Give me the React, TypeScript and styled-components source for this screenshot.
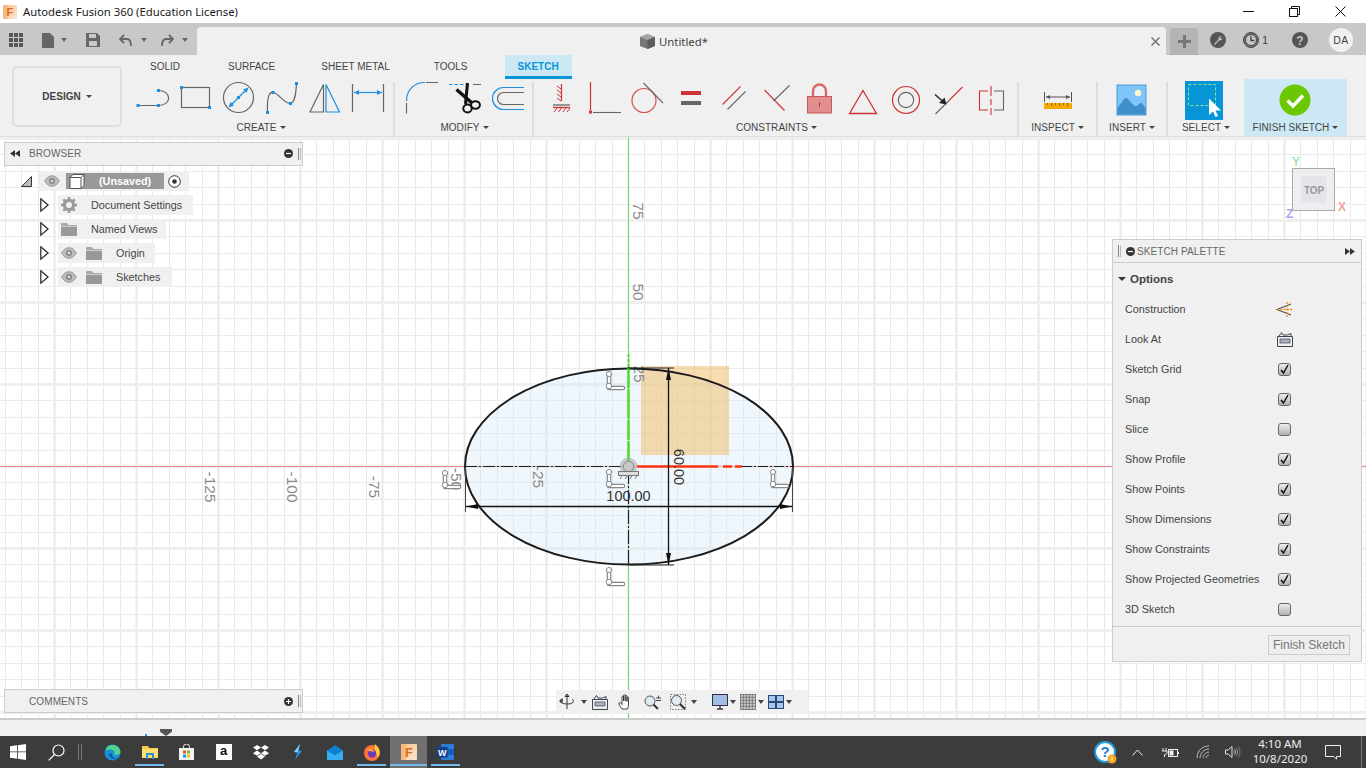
import React from "react";
import styled, { createGlobalStyle } from "styled-components";

const Global = createGlobalStyle`
  html, body { margin: 0; padding: 0; height: 100%; overflow: hidden; }
  body { font-family: "Liberation Sans", Arial, sans-serif; background: #fff; }
  * { box-sizing: border-box; }
`;

const Shell = styled.div`
  width: 1366px; height: 768px; display: flex; flex-direction: column; overflow: hidden;
`;

/* Title bar */
const TitleBar = styled.div`
  height: 23px; background: #fff; display: flex; align-items: center; padding-left: 3px;
`;
const TitleText = styled.span`
  font-family: "Noto Sans", sans-serif; font-size: 11.3px; color: #1a1a1a; margin-left: 6px; white-space: nowrap;
`;
const WinControls = styled.div`
  margin-left: auto; display: flex; align-items: center; width: 141px;
`;
const WinBtn = styled.div`
  width: 46px; height: 23px; display: flex; align-items: center; justify-content: center;
`;

/* QAT */
const QatBar = styled.div`
  height: 32px; background: #c8c8c8; display: flex;
`;
const QatLeft = styled.div`
  width: 197px; display: flex; align-items: center; padding-left: 9px; padding-top: 2px;
`;
const QatIcon = styled.svg<{ $ml: number }>`
  margin-left: ${p => p.$ml}px; flex: none; display: block;
`;
const Caret = styled.span<{ $ml?: number; $c?: string; $w?: number }>`
  display: inline-block; flex: none; width: 0; height: 0;
  margin-left: ${p => p.$ml ?? 0}px;
  border-left: ${p => (p.$w ?? 6) / 2}px solid transparent;
  border-right: ${p => (p.$w ?? 6) / 2}px solid transparent;
  border-top: ${p => Math.round((p.$w ?? 6) * 0.55)}px solid ${p => p.$c ?? "#444"};
`;
const DocTab = styled.div`
  width: 969px; margin-top: 4px; background: #f0f0f0; border-radius: 4px 4px 0 0;
  display: grid; grid-template-columns: 1fr 22px; align-items: center;
`;
const DocTitle = styled.div`
  display: flex; align-items: center; justify-content: center; gap: 4px; padding-left: 7px;
  font-family: "Noto Sans", sans-serif; font-size: 11.3px; color: #444;
`;
const DocClose = styled.div`
  display: flex; justify-content: center;
`;
const PlusTab = styled.div`
  width: 28px; height: 27px; margin: 5px 0 0 4px; background: #b4b4b4; border-radius: 3px 3px 0 0;
  display: flex; align-items: center; justify-content: center;
`;
const QatRight = styled.div`
  display: flex; align-items: center; padding-top: 2px;
`;
const QatCount = styled.span`
  font-size: 11px; color: #444; margin-left: 3px; width: 6px;
`;
const Avatar = styled.div`
  width: 24px; height: 24px; border-radius: 50%; background: #f0f0f0; margin-left: 21px;
  display: flex; align-items: center; justify-content: center; font-size: 10.5px; color: #444; letter-spacing: .5px;
`;

/* Ribbon */
const Ribbon = styled.div`
  height: 82px; background: #f0f0f0; border-bottom: 1px solid #ddd; display: flex; padding-left: 12px;
`;
const DesignButton = styled.div`
  width: 110px; height: 61px; margin: 11px 10px 0 0; border: 2px solid #dedede; border-radius: 5px;
  display: flex; align-items: center; justify-content: center; gap: 5px;
  font-size: 10px; font-weight: 700; color: #444;
`;
const RibbonMain = styled.div`
  display: flex; flex-direction: column; flex: 1;
`;
const TabRow = styled.div`
  height: 24px; display: flex; gap: 20px; padding-left: 5px;
`;
const Tab = styled.div<{ $active?: boolean; $ml?: number }>`
  height: 24px; padding: 1px 13px 0; display: flex; align-items: center;
  font-size: 10px; white-space: nowrap;
  color: ${p => (p.$active ? "#0696d7" : "#444")};
  font-weight: ${p => (p.$active ? 700 : 400)};
  background: ${p => (p.$active ? "#cce8f5" : "transparent")};
  border-bottom: 3px solid ${p => (p.$active ? "#0696d7" : "transparent")};
  margin-left: ${p => p.$ml ?? 0}px;
`;
const ToolRow = styled.div`
  height: 57px; display: flex;
`;
const Group = styled.div<{ $w: number; $bg?: string }>`
  width: ${p => p.$w}px; flex: none; display: flex; flex-direction: column; align-items: center;
  background: ${p => p.$bg ?? "transparent"};
`;
const Cells = styled.div`
  height: 38px; display: flex;
`;
const ToolIcon = styled.svg<{ $w: number }>`
  width: ${p => p.$w}px; height: 38px; display: block; flex: none; overflow: visible;
`;
const GroupLabel = styled.div`
  height: 19px; padding-top: 2px; display: flex; align-items: center; gap: 3px;
  font-size: 10px; letter-spacing: .05px; color: #444; white-space: nowrap;
`;
const Divider = styled.div<{ $l: number; $r: number }>`
  width: 2px; height: 54px; margin: 3px ${p => p.$r}px 0 ${p => p.$l}px; background: #dcdcdc; flex: none;
`;

/* Canvas */
const Canvas = styled.div`
  position: relative; height: 581px; background: #fff; overflow: hidden;
`;
const Drawing = styled.svg`
  display: block; width: 1366px; height: 581px;
`;
const AxisText = styled.text`
  font-family: "Liberation Sans", sans-serif; font-size: 15.5px; fill: #8a8a8a; text-anchor: middle; dominant-baseline: central;
`;
const DimText = styled(AxisText)`
  fill: #333; font-size: 14.5px;
`;

const SidePanel = styled.div<{ $top?: number; $bottom?: number }>`
  position: absolute; left: 4px; width: 299px; height: 24px;
  ${p => (p.$top !== undefined ? `top:${p.$top}px; padding-bottom: 1px;` : "")}
  ${p => (p.$bottom !== undefined ? `bottom:${p.$bottom}px;` : "")}
  background: #f0f0f0; border: 1px solid #ccc; display: flex; align-items: center;
  font-size: 10px; letter-spacing: .1px; color: #666;
`;
const PanelTitle = styled.span<{ $ml: number }>`
  margin-left: ${p => p.$ml}px; flex: 1;
`;
const Grip = styled.span`
  width: 3px; height: 12px; margin: 0 1px 0 5px; border-left: 1px solid #888; border-right: 1px solid #bbb;
`;
const Tree = styled.div`
  position: absolute; left: 0; top: 32px; display: flex; flex-direction: column;
`;
const TreeRow = styled.div<{ $pl: number }>`
  height: 24px; display: flex; align-items: center; padding-left: ${p => p.$pl}px;
`;
const Chip = styled.div<{ $ml: number; $pl: number; $pr: number }>`
  height: 20px; display: flex; align-items: center; background: #f0f0f0;
  margin-left: ${p => p.$ml}px; padding: 0 ${p => p.$pr}px 0 ${p => p.$pl}px;
  font-size: 10.8px; color: #444; white-space: nowrap;
`;
const ChipText = styled.span<{ $ml: number }>`
  margin-left: ${p => p.$ml}px;
`;
const RootBar = styled.div`
  width: 98px; height: 16px; margin: 0 4px 0 6px; background: #999; display: flex; align-items: center;
  color: #fff; font-weight: 700; font-size: 10.8px; padding-left: 3px;
`;
const RootName = styled.span`
  margin-left: 14px;
`;
const ChipIcon = styled.svg<{ $ml?: number }>`
  flex: none; display: block; margin-left: ${p => p.$ml ?? 0}px;
`;

const ViewCube = styled.div`
  position: absolute; left: 1292px; top: 31px; width: 43px; height: 43px; background: rgba(236,236,238,.85);
  border: 1px solid #aaa; display: flex; align-items: center; justify-content: center;
`;
const CubeFace = styled.div`
  width: 28px; height: 27px; background: #e4e4ea; display: flex; align-items: center; justify-content: center;
  font-size: 11px; font-weight: 700; color: #999; transform: scaleX(.9);
`;
const AxisMark = styled.span<{ $x: number; $y: number; $c: string }>`
  position: absolute; left: ${p => p.$x}px; top: ${p => p.$y}px; color: ${p => p.$c};
  font-size: 12px; font-weight: 700; line-height: 12px;
`;

const Palette = styled.div`
  position: absolute; left: 1112px; top: 102px; width: 250px; height: 423px; background: #f0f0f0;
  border: 1px solid #ccc; display: flex; flex-direction: column;
`;
const PaletteHead = styled.div`
  height: 23px; border-bottom: 1px solid #ccc; display: flex; align-items: center; padding: 0 6px 0 0;
  font-size: 10px; letter-spacing: .1px; color: #666;
`;
const PaletteTitle = styled.span`
  margin-left: 2px; flex: 1;
`;
const OptionsHead = styled.div`
  height: 31px; display: flex; align-items: center; gap: 4px; padding-left: 5px;
  font-size: 11.5px; font-weight: 700; color: #444;
`;
const OptRow = styled.div`
  height: 30px; display: flex; align-items: center; padding-left: 12px; font-size: 10.8px; color: #444;
`;
const OptLabel = styled.span`
  width: 154px; white-space: nowrap;
`;
const ControlSlot = styled.div`
  width: 13px; height: 13px; margin-left: -1px; display: flex; align-items: center; justify-content: center; flex: none;
`;
const Check = styled.div`
  width: 13px; height: 13px; flex: none; border: 1px solid #666; border-radius: 3px;
  background: linear-gradient(#eee, #b0b0b0); display: flex; align-items: center; justify-content: center;
`;
const PaletteFoot = styled.div`
  margin-top: 2px; flex: 1; border-top: 1px solid #ccc; display: flex; justify-content: flex-end; padding: 8px 11px 0 0;
`;
const FinishBtn = styled.div`
  width: 82px; height: 20px; border: 1px solid #ccc; background: #eee; display: flex; align-items: center; justify-content: center;
  font-size: 12px; color: #777;
`;
const NavBar = styled.div`
  position: absolute; left: 556px; bottom: 5px; width: 252px; height: 23px; background: #f0f0f0;
  display: flex; align-items: center; padding-left: 3px;
`;

/* Timeline */
const Timeline = styled.div`
  height: 18px; background: #f0f0f0; border-top: 2px solid #ccc; display: flex; align-items: flex-end; padding-left: 145px;
`;
const TimelineDot = styled.div`
  width: 2px; height: 2px; background: #2a8fe0; margin-right: 13px;
`;
const Marker = styled.div`
  width: 12px; height: 7px; background: #555; clip-path: polygon(0 0, 100% 0, 100% 40%, 50% 100%, 0 40%);
`;

/* Taskbar */
const Taskbar = styled.div`
  height: 32px; background: #3c3c3c; display: flex; align-items: center;
`;
const TaskCell = styled.div<{ $w: number; $active?: boolean; $line?: boolean }>`
  position: relative; width: ${p => p.$w}px; height: 32px; flex: none; display: flex; align-items: center; justify-content: center;
  background: ${p => (p.$active ? "#707070" : "transparent")};
  &::after {
    content: ""; display: ${p => (p.$line ? "block" : "none")};
    position: absolute; left: ${p => (p.$active ? 0 : 4)}px; right: ${p => (p.$active ? 0 : 4)}px; bottom: 2px; height: 2px; background: #76b9ed;
  }
`;
const TaskSep = styled.div`
  width: 4px; height: 16px; margin: 0 12px 0 2px; border-left: 1px solid #777; border-right: 1px solid #777;
`;
const Tray = styled.div`
  margin-left: auto; display: flex; align-items: center;
`;
const Clock = styled.div`
  width: 68px; height: 32px; padding-bottom: 2px; display: flex; flex-direction: column; align-items: center; justify-content: center;
  font-family: "Noto Sans", sans-serif; font-size: 11.5px; line-height: 15px; color: #eee;
`;
const TrayEnd = styled.div`
  width: 14px; height: 32px; border-right: 0; position: relative;
  &::after { content: ""; position: absolute; left: 9px; top: 0; bottom: 0; width: 1px; background: #777; }
`;
const AmazonTile = styled.div`
  width: 16px; height: 16px; background: #fff; color: #111; font-size: 13px; font-weight: 700;
  display: flex; align-items: flex-start; justify-content: center; line-height: 13px;
`;

/* ---------- drawings ---------- */
const BLUE = "#1a8fe3";
const GR = "#666";
const RED = "#cc3333";

const Sq = ({ x, y }: { x: number; y: number }) => <rect x={x - 1.5} y={y - 1.5} width={3} height={3} fill={BLUE} />;

const Tool = ({ x, w = 43, children }: { x: number; w?: number; children: React.ReactNode }) => (
  <ToolIcon $w={w} viewBox={`${x} 79 ${w} 38`} fill="none">{children}</ToolIcon>
);

const Eye = ({ ml }: { ml?: number }) => (
  <ChipIcon $ml={ml} width="16" height="12" viewBox="0 0 16 12">
    <path d="M0.5 6C3 2 5.5 .8 8 .8S13 2 15.5 6C13 10 10.5 11.2 8 11.2S3 10 .5 6Z" fill="#bbb" stroke="#999" />
    <circle cx="8" cy="6" r="3" fill="#888" />
    <circle cx="8" cy="6" r="1.3" fill="#ddd" />
  </ChipIcon>
);
const Folder = ({ ml }: { ml?: number }) => (
  <ChipIcon $ml={ml} width="16" height="13" viewBox="0 0 16 13">
    <path d="M0 0H6L7.5 2H16V3.5H0Z" fill="#aaa" /><rect y="4" width="16" height="9" fill="#999" />
  </ChipIcon>
);
const Gear = () => (
  <ChipIcon width="16" height="16" viewBox="0 0 16 16">
    <circle cx="8" cy="8" r="4.6" fill="none" stroke="#999" strokeWidth="3.2" />
    <path d="M8 0V16M0 8H16M2.3 2.3L13.7 13.7M13.7 2.3L2.3 13.7" stroke="#999" strokeWidth="2.6" strokeDasharray="3 10 3 0" />
  </ChipIcon>
);
const Expand = () => (
  <ChipIcon width="9" height="14" viewBox="0 0 9 14">
    <path d="M.8.8L8 7L.8 13.2Z" fill="#fff" stroke="#333" strokeWidth="1.3" />
  </ChipIcon>
);
const LookAt = ({ size = 16 }: { size?: number }) => (
  <ChipIcon width={size} height={size} viewBox="0 0 16 16">
    <path d="M.5 5.5V15.5H15.5V5.5H.5ZM2 5L4.5 1.5L6 4H10.5L14 2.5V5" fill="none" stroke="#3c4652" />
    <rect x="3" y="8" width="10" height="4" fill="#a9b2c0" stroke="#3c4652" strokeWidth=".7" />
  </ChipIcon>
);
const Tick = () => (
  <svg width="11" height="11" viewBox="0 0 11 11"><path d="M2 6L4.5 9L9 1" fill="none" stroke="#111" strokeWidth="1.5" /></svg>
);

const GridLines = () => {
  const xs: number[] = [];
  const ys: number[] = [];
  for (let k = -39; k <= 45; k++) xs.push(k);
  for (let k = -21; k <= 16; k++) ys.push(k);
  return (
    <g shapeRendering="crispEdges">
      {xs.map(k => {
        const x = Math.round(628 + k * 16.4) + .5;
        return (
          <g key={"x" + k}>
            {k % 5 === 0 && <line x1={x} x2={x} y1={137} y2={718} stroke="#f3f3f3" strokeWidth={3} />}
            <line x1={x} x2={x} y1={137} y2={718} stroke="#e9e9e9" />
          </g>
        );
      })}
      {ys.map(k => {
        const y = Math.round(466 + k * 16.4) + .5;
        return k % 5 === 0
          ? <line key={"y" + k} y1={y} y2={y} x1={0} x2={1366} stroke="#efefef" strokeWidth={3} />
          : <line key={"y" + k} y1={y} y2={y} x1={0} x2={1366} stroke="#ebebeb" />;
      })}
    </g>
  );
};

const PerpMark = ({ x, y }: { x: number; y: number }) => (
  <g transform={`translate(${x} ${y})`} fill="none" strokeLinecap="round" strokeLinejoin="round">
    <path d="M3 3V17H17" stroke="#8a8a8a" strokeWidth="4.6" />
    <path d="M3 3V17H17" stroke="#fff" strokeWidth="2.2" />
    <circle cx="3" cy="3" r="2.6" fill="#fff" stroke="#8a8a8a" />
    <circle cx="3" cy="15" r="2.8" fill="#fff" stroke="#8a8a8a" />
  </g>
);

const SketchScene = () => (
  <Drawing viewBox="0 137 1366 581">
    <GridLines />
    <line x1="0" x2="1366" y1="466.5" y2="466.5" stroke="#f08a8a" />
    <line x1="628.5" x2="628.5" y1="137" y2="718" stroke="#6fe06f" />
    <AxisText x="210" y="487" transform="rotate(90 210 487)">-125</AxisText>
    <AxisText x="292" y="487" transform="rotate(90 292 487)">-100</AxisText>
    <AxisText x="374" y="487" transform="rotate(90 374 487)">-75</AxisText>
    <AxisText x="638" y="211" transform="rotate(90 638 211)">75</AxisText>
    <AxisText x="638" y="292" transform="rotate(90 638 292)">50</AxisText>
    <ellipse cx="629" cy="466.5" rx="164" ry="98" fill="#d7e9f8" fillOpacity=".38" />
    <rect x="641" y="366" width="88" height="89" fill="#f0c070" fillOpacity=".55" />
    <AxisText x="456" y="479" transform="rotate(90 456 479)">-50</AxisText>
    <AxisText x="538" y="477" transform="rotate(90 538 477)">-25</AxisText>
    <AxisText x="639" y="374" transform="rotate(90 639 374)">25</AxisText>
    <ellipse cx="629" cy="466.5" rx="164" ry="98" fill="none" stroke="#1c1c1c" strokeWidth="2" />
    <line x1="465" x2="628" y1="466.5" y2="466.5" stroke="#222" strokeWidth="1.2" strokeDasharray="12 2 2 2" />
    <line x1="628.5" x2="628.5" y1="470" y2="566" stroke="#222" strokeWidth="1.2" strokeDasharray="14 2 2 2" />
    <line x1="628.5" x2="628.5" y1="368" y2="462" stroke="#44dd22" strokeWidth="2.4" strokeDasharray="20 1 30 1" />
    <line x1="628.5" x2="628.5" y1="354" y2="368" stroke="#44dd22" strokeWidth="2" strokeDasharray="3 2" />
    <path d="M637 466.5H718M723 466.5H732M735 466.5H742" stroke="#ff3311" strokeWidth="2.6" />
    <path d="M742 466.5H793" stroke="#222" strokeWidth="1.2" strokeDasharray="10 2 2 2" />
    <path d="M628 368H674M630 565H674" stroke="#222" strokeWidth="1.2" />
    <path d="M668.5 368V565" stroke="#111" strokeWidth="1.3" />
    <path d="M668.5 368L666 380H671ZM668.5 565L666 553H671Z" fill="#111" />
    <path d="M465.5 467V512M792.5 467V512" stroke="#444" strokeWidth="1" />
    <path d="M466 506.5H792" stroke="#111" strokeWidth="1.3" />
    <path d="M466 506.5L478 504V509ZM792 506.5L780 504V509Z" fill="#111" />
    <DimText x="679" y="467" transform="rotate(90 679 467)">60.00</DimText>
    <DimText x="628.5" y="496">100.00</DimText>
    <PerpMark x={606} y={371} />
    <PerpMark x={606} y={469} />
    <PerpMark x={770} y={469} />
    <PerpMark x={606} y={567} />
    <PerpMark x={442} y={470} />
    <circle cx="628.5" cy="466.5" r="9" fill="#aaa" fillOpacity=".55" />
    <circle cx="628.5" cy="466.5" r="5.2" fill="#c8c8c8" stroke="#888" />
    <rect x="618.5" y="471.5" width="20" height="4" fill="#ddd" stroke="#777" />
    <path d="M620 479L622 475.5M625 479L627 475.5M630 479L632 475.5M635 479L637 475.5" stroke="#777" />
  </Drawing>
);

const CreateGroup = () => (
  <Cells>
    <Tool x={132}>
      <path d="M138 105.5H158.5M158.5 90.5C172 90.5 172 105.5 158.5 105.5" stroke={GR} strokeWidth="1.2" />
      <Sq x={138} y={105.5} /><Sq x={158.5} y={105.5} /><Sq x={158.5} y={90.5} />
    </Tool>
    <Tool x={175}>
      <rect x="181.5" y="87.5" width="28" height="20" stroke={GR} strokeWidth="1.2" />
      <Sq x={181.5} y={87.5} /><Sq x={209.5} y={107.5} />
    </Tool>
    <Tool x={218}>
      <circle cx="238.5" cy="97.5" r="15" stroke={GR} strokeWidth="1.2" />
      <path d="M229.5 106.5L247.5 88.5" stroke={BLUE} strokeWidth="1.2" />
      <path d="M228.5 107.5L234 105.5L230.5 102ZM248.5 87.5L243 89.5L246.5 93Z" fill={BLUE} />
      <Sq x={238.5} y={97.5} />
    </Tool>
    <Tool x={261}>
      <path d="M267.5 112C267 97 269 92 273 92.5C279 93 283 103 290 103.5C295 103.5 296 93 296.5 83" stroke={GR} strokeWidth="1.2" />
      <Sq x={267.5} y={112.5} /><Sq x={273} y={92.5} /><Sq x={290.5} y={103.5} /><Sq x={296.5} y={83.5} />
    </Tool>
    <Tool x={304}>
      <path d="M323.5 84.5L310 112H323.5Z" stroke={GR} strokeWidth="1.2" />
      <path d="M326 84.5L339.5 112H326Z" stroke={BLUE} strokeWidth="1.2" />
    </Tool>
    <Tool x={347}>
      <path d="M352.5 84V112M383.5 84V112" stroke={GR} strokeWidth="1.2" />
      <path d="M354 92.5H382" stroke={BLUE} strokeWidth="1.2" />
      <path d="M354 92.5L359 90V95ZM382 92.5L377 90V95Z" fill={BLUE} />
    </Tool>
  </Cells>
);

const ModifyGroup = () => (
  <Cells>
    <Tool x={400}>
      <path d="M406.5 101C406.5 90 414 82.5 425 82.5" stroke={BLUE} strokeWidth="1.2" />
      <path d="M406.5 103V113.5M426 82.5H438" stroke={GR} strokeWidth="1.2" />
    </Tool>
    <Tool x={443}>
      <path d="M449 84.5H470" stroke={BLUE} strokeDasharray="3.5 2" />
      <path d="M473 84.5H481" stroke={GR} />
      <path d="M456.5 89.5L472 103" stroke="#111" strokeWidth="3.4" />
      <path d="M467.5 83L465.5 104" stroke="#111" strokeWidth="3" />
      <ellipse cx="467.5" cy="108.5" rx="4.2" ry="4" stroke="#111" strokeWidth="2" />
      <ellipse cx="475.5" cy="105" rx="4.4" ry="3.8" stroke="#111" strokeWidth="2" />
    </Tool>
    <Tool x={486}>
      <path d="M524 87.5H503.5A11 11 0 0 0 503.5 109.5H524" stroke={BLUE} strokeWidth="1.2" />
      <path d="M524 92.5H503.5A6 6 0 0 0 503.5 104.5H524" stroke={GR} strokeWidth="1.2" />
    </Tool>
  </Cells>
);

const ConstraintsGroup = () => (
  <Cells>
    <Tool x={540}>
      <path d="M561.5 84V101" stroke={RED} strokeWidth="1.2" />
      <path d="M557 86L561 89M557 90L561 93M557 94L561 97M557 98L561 101" stroke={RED} />
      <path d="M553 105H570" stroke={GR} strokeWidth="1.3" />
      <path d="M553 107.5H570" stroke={RED} strokeWidth="1.3" />
      <path d="M554 112L557 108M558.5 112L561.5 108M563 112L566 108M567 112L570 108" stroke={RED} />
    </Tool>
    <Tool x={583}>
      <path d="M590.5 82V110" stroke={RED} strokeWidth="1.2" />
      <rect x="589" y="110.5" width="3" height="3" fill={RED} />
      <path d="M593 112.5H621" stroke={GR} strokeWidth="1.1" />
    </Tool>
    <Tool x={626}>
      <circle cx="644" cy="100.5" r="12" stroke="#d45050" strokeWidth="1.2" />
      <path d="M643.5 83L663 103" stroke={GR} strokeWidth="1.1" />
    </Tool>
    <Tool x={669}>
      <rect x="681" y="91" width="20" height="4" fill={RED} />
      <rect x="681" y="101" width="20" height="4" fill={GR} />
    </Tool>
    <Tool x={712}>
      <path d="M722.5 104.5L740.5 86.5" stroke={RED} strokeWidth="1.1" />
      <path d="M727.5 109.5L745.5 91.5" stroke={GR} strokeWidth="1.1" />
    </Tool>
    <Tool x={755}>
      <path d="M764.5 90L784.5 110.5" stroke={RED} strokeWidth="1.1" />
      <path d="M773.5 101L789.5 85.5" stroke={GR} strokeWidth="1.1" />
    </Tool>
    <Tool x={798}>
      <path d="M813 96V91A6.5 6.5 0 0 1 826 91V96" stroke="#d86a6a" strokeWidth="2.4" />
      <rect x="807.5" y="96.5" width="24" height="16.5" fill="#e08e8e" stroke="#cc5555" />
      <path d="M819.5 102.5V106.5" stroke="#a33" />
    </Tool>
    <Tool x={841}>
      <path d="M863 90.5L876.5 113.5H849.5Z" stroke="#d03030" strokeWidth="1.3" />
    </Tool>
    <Tool x={884}>
      <circle cx="906" cy="100" r="13.5" stroke="#d03030" strokeWidth="1.2" />
      <circle cx="906" cy="100" r="7.7" stroke={GR} strokeWidth="1.2" />
    </Tool>
    <Tool x={927}>
      <path d="M935.5 114L949 100.5" stroke={GR} strokeWidth="1.1" />
      <path d="M949 100.5L962.5 87" stroke={RED} strokeWidth="1.1" />
      <path d="M935 94.5L943 101.5" stroke="#222" strokeWidth="1.4" />
      <path d="M946.5 104.5L939 103L944.5 97.5Z" fill="#222" />
    </Tool>
    <Tool x={970}>
      <path d="M988 91H979.5V110H988" stroke={RED} strokeWidth="1.1" />
      <path d="M994 91H1003.5V110H994" stroke={GR} strokeWidth="1.1" />
      <path d="M991 86V96M991 99V105M991 108V115" stroke={RED} strokeWidth="1.1" />
    </Tool>
  </Cells>
);

const Taskicons = {
  Win: () => (
    <svg width="16" height="16" viewBox="0 0 16 16" fill="#fff">
      <path d="M0 2.3L7 1.3V7.5H0ZM7.8 1.2L16 0V7.5H7.8ZM0 8.3H7V14.7L0 13.7ZM7.8 8.3H16V16L7.8 14.8Z" />
    </svg>
  ),
  Search: () => (
    <svg width="17" height="17" viewBox="0 0 17 17" fill="none" stroke="#fff" strokeWidth="1.2">
      <circle cx="10.5" cy="6.5" r="5.5" /><path d="M6.5 10.5L.7 16.3" />
    </svg>
  ),
  Edge: () => (
    <svg width="17" height="17" viewBox="0 0 17 17">
      <circle cx="8.5" cy="8.5" r="8" fill="#1b8fd6" />
      <path d="M2 4.5C5 -.5 14 -.5 16.5 7C17 10.5 12.5 12 10 10.5C12 8 9 5 6 5.5C4 6 3 7 2 4.5Z" fill="#4fd38d" />
      <path d="M5 10C5 14 10 16.5 14 14.5C10 15 7.5 12.5 8 9.5Z" fill="#0c5aa6" />
    </svg>
  ),
  Folder: () => (
    <svg width="16" height="14" viewBox="0 0 16 14">
      <path d="M0 1H6L7.5 3H16V13H0Z" fill="#f7c948" />
      <rect y="4" width="16" height="9" fill="#ffdf70" />
      <path d="M4 14V8H12V14H10V10H6V14Z" fill="#2a8fd8" />
    </svg>
  ),
  Store: () => (
    <svg width="15" height="16" viewBox="0 0 15 16">
      <path d="M4.5 4V2.5A3 2.5 0 0 1 10.5 2.5V4" fill="none" stroke="#eee" />
      <rect y="4" width="15" height="12" fill="#f2f2f2" />
      <rect x="4" y="6.5" width="3" height="3" fill="#f25022" /><rect x="8" y="6.5" width="3" height="3" fill="#7fba00" />
      <rect x="4" y="10.5" width="3" height="3" fill="#00a4ef" /><rect x="8" y="10.5" width="3" height="3" fill="#ffb900" />
    </svg>
  ),
  Dropbox: () => (
    <svg width="16" height="15" viewBox="0 0 16 15" fill="#fff">
      <path d="M4 0L8 2.6L4 5.2L0 2.6ZM12 0L16 2.6L12 5.2L8 2.6ZM4 5.6L8 8.2L4 10.8L0 8.2ZM12 5.6L16 8.2L12 10.8L8 8.2ZM4 11.6L8 9L12 11.6L8 14.4Z" />
    </svg>
  ),
  Bolt: () => (
    <svg width="10" height="16" viewBox="0 0 10 16">
      <path d="M7 0L1 8L4.5 8.5L2 16L9 7L5.5 6.5Z" fill="#2f8fe8" />
      <path d="M7 0L1 8L4.5 8.5Z" fill="#7fd0ff" />
    </svg>
  ),
  Mail: () => (
    <svg width="16" height="15" viewBox="0 0 16 15">
      <path d="M0 5.5L8 0L16 5.5V15H0Z" fill="#0f7fd0" />
      <path d="M0 5.5L8 10.5L16 5.5V15H0Z" fill="#35aef0" />
    </svg>
  ),
  Firefox: () => (
    <svg width="16" height="17" viewBox="0 0 16 17">
      <circle cx="8" cy="9" r="8" fill="#ff7139" />
      <path d="M11 0C16 4 17 9 14 13C11 9 10 5 11 0Z" fill="#ffc93a" />
      <circle cx="8" cy="9.5" r="4.2" fill="#6b3bb8" />
      <path d="M3 5C6 3 10 5 10 8C7 7 4 8 3 5Z" fill="#ff9a3a" />
    </svg>
  ),
  Word: () => (
    <svg width="17" height="16" viewBox="0 0 17 16">
      <rect x="4" width="13" height="16" rx="1" fill="#2b7cd3" />
      <rect x="4" y="5" width="13" height="6" fill="#185abd" />
      <rect y="3" width="10.5" height="10.5" fill="#123f8f" />
      <text x="5.2" y="11.5" fontFamily="Liberation Sans" fontSize="9" fontWeight="700" fill="#fff" textAnchor="middle">W</text>
    </svg>
  ),
};

const FusionLogo = ({ size }: { size: number }) => (
  <svg width={size} height={size} viewBox="0 0 16 16">
    <defs>
      <linearGradient id={`fl${size}`} x1="0" y1="0" x2="1" y2="1">
        <stop offset="0" stopColor="#f9c28c" /><stop offset="1" stopColor="#fbe6d0" />
      </linearGradient>
    </defs>
    <rect width="16" height="16" rx="1" fill={`url(#fl${size})`} />
    <rect x="0" y="0" width="5" height="16" fill="#f2b173" opacity=".7" />
    <text x="8" y="12.5" fontFamily="Liberation Sans" fontSize="13" fontWeight="700" fill="#e0691b" textAnchor="middle">F</text>
  </svg>
);

const options: { label: string; kind: "con" | "look" | "on" | "off" }[] = [
  { label: "Construction", kind: "con" },
  { label: "Look At", kind: "look" },
  { label: "Sketch Grid", kind: "on" },
  { label: "Snap", kind: "on" },
  { label: "Slice", kind: "off" },
  { label: "Show Profile", kind: "on" },
  { label: "Show Points", kind: "on" },
  { label: "Show Dimensions", kind: "on" },
  { label: "Show Constraints", kind: "on" },
  { label: "Show Projected Geometries", kind: "on" },
  { label: "3D Sketch", kind: "off" },
];

const Control = ({ kind }: { kind: string }) => {
  if (kind === "con")
    return (
      <ChipIcon width="17" height="17" viewBox="0 0 17 17" fill="none">
        <path d="M15 3L1 8.5L15 14" stroke="#555" strokeWidth="1.1" />
        <path d="M1 8.5H16.5M11 1V16" stroke="#ee8800" strokeWidth="1.3" strokeDasharray="2 1.3" />
      </ChipIcon>
    );
  if (kind === "look") return <LookAt />;
  return <Check>{kind === "on" && <Tick />}</Check>;
};

export default function App() {
  return (
    <Shell>
      <Global />
      <TitleBar>
        <FusionLogo size={14} />
        <TitleText>Autodesk Fusion 360 (Education License)</TitleText>
        <WinControls>
          <WinBtn><svg width="11" height="11" viewBox="0 0 11 11"><path d="M0 5.5H11" stroke="#111" /></svg></WinBtn>
          <WinBtn><svg width="11" height="11" viewBox="0 0 11 11" fill="none" stroke="#111"><rect x=".5" y="2.5" width="8" height="8" /><path d="M2.5 2.5V.5H10.5V8.5H8.5" /></svg></WinBtn>
          <WinBtn><svg width="11" height="11" viewBox="0 0 11 11" stroke="#111"><path d="M.5.5L10.5 10.5M10.5.5L.5 10.5" /></svg></WinBtn>
        </WinControls>
      </TitleBar>

      <QatBar>
        <QatLeft>
          <QatIcon $ml={0} width="14" height="14" viewBox="0 0 14 14" fill="#555">
            {[0, 5, 10].flatMap(y => [0, 5, 10].map(x => <rect key={`${x}${y}`} x={x} y={y} width="4" height="4" rx=".5" />))}
          </QatIcon>
          <QatIcon $ml={19} width="12" height="15" viewBox="0 0 12 15" fill="#666"><path d="M0 0H8L12 4V15H0Z" /></QatIcon>
          <Caret $ml={7} $w={7} $c="#666" />
          <QatIcon $ml={19} width="14" height="14" viewBox="0 0 14 14"><path d="M0 0H11L14 3V14H0Z" fill="#666" /><rect x="3" y="1" width="7" height="4" fill="#c8c8c8" /><rect x="3" y="8" width="8" height="5" fill="#c8c8c8" /></QatIcon>
          <QatIcon $ml={19} width="13" height="13" viewBox="0 0 13 13" fill="none"><path d="M5 1L1 5L5 9" stroke="#666" strokeWidth="1.8" /><path d="M1.5 5H8C11 5 12 8 12 12" stroke="#666" strokeWidth="1.8" /></QatIcon>
          <Caret $ml={9} $w={7} $c="#666" />
          <QatIcon $ml={14} width="13" height="13" viewBox="0 0 13 13" fill="none"><path d="M8 1L12 5L8 9" stroke="#666" strokeWidth="1.8" /><path d="M11.5 5H5C2 5 1 8 1 12" stroke="#666" strokeWidth="1.8" /></QatIcon>
          <Caret $ml={8} $w={7} $c="#666" />
        </QatLeft>
        <DocTab>
          <DocTitle>
            <svg width="15" height="15" viewBox="0 0 15 15"><path d="M7.5 0L15 3V12L7.5 15L0 12V3Z" fill="#777" /><path d="M0 3L7.5 6L15 3L7.5 0Z" fill="#a5a5a5" /><path d="M7.5 6V15L15 12V3Z" fill="#5c5c5c" /></svg>
            Untitled*
          </DocTitle>
          <DocClose><svg width="9" height="9" viewBox="0 0 9 9" stroke="#777" strokeWidth="1.5"><path d="M.5.5L8.5 8.5M8.5.5L.5 8.5" /></svg></DocClose>
        </DocTab>
        <PlusTab><svg width="13" height="13" viewBox="0 0 13 13" stroke="#777" strokeWidth="3"><path d="M6.5 0V13M0 6.5H13" /></svg></PlusTab>
        <QatRight>
          <QatIcon $ml={12} width="16" height="16" viewBox="0 0 16 16"><circle cx="8" cy="8" r="8" fill="#555" /><path d="M4 12L8.5 7.5C8 5.5 9.5 4 11.5 4L10 6L11 7L12.5 5.5C12.5 7.5 11 9 9 8.5L5 13Z" fill="#c8c8c8" /></QatIcon>
          <QatIcon $ml={17} width="16" height="16" viewBox="0 0 16 16" fill="none"><circle cx="8" cy="8" r="7.5" fill="#777" stroke="#444" /><circle cx="8" cy="8" r="5.5" fill="#c8c8c8" stroke="#444" /><path d="M8 4V8.5H11.5" stroke="#444" strokeWidth="1.3" /></QatIcon>
          <QatCount>1</QatCount>
          <QatIcon $ml={24} width="16" height="16" viewBox="0 0 16 16"><circle cx="8" cy="8" r="8" fill="#555" /><text x="8" y="12.5" textAnchor="middle" fontFamily="Liberation Sans" fontSize="12" fontWeight="700" fill="#c8c8c8">?</text></QatIcon>
          <Avatar>DA</Avatar>
        </QatRight>
      </QatBar>

      <Ribbon>
        <DesignButton>DESIGN <Caret $w={6} /></DesignButton>
        <RibbonMain>
          <TabRow>
            <Tab>SOLID</Tab>
            <Tab $ml={2}>SURFACE</Tab>
            <Tab>SHEET METAL</Tab>
            <Tab $ml={-2}>TOOLS</Tab>
            <Tab $active $ml={4}>SKETCH</Tab>
          </TabRow>
          <ToolRow>
            <Group $w={258}>
              <CreateGroup />
              <GroupLabel>CREATE <Caret /></GroupLabel>
            </Group>
            <Divider $l={3} $r={5} />
            <Group $w={129}>
              <ModifyGroup />
              <GroupLabel>MODIFY <Caret /></GroupLabel>
            </Group>
            <Divider $l={3} $r={6} />
            <Group $w={473}>
              <ConstraintsGroup />
              <GroupLabel>CONSTRAINTS <Caret /></GroupLabel>
            </Group>
            <Divider $l={4} $r={0} />
            <Group $w={77}>
              <Cells>
                <Tool x={1019} w={77}>
                  <path d="M1044.5 92V102M1071.5 92V102M1046 97H1070" stroke="#555" />
                  <path d="M1046 97L1050 95V99ZM1070 97L1066 95V99Z" fill="#555" />
                  <rect x="1044" y="103" width="28" height="6" fill="#f5a800" />
                  <path d="M1047.5 103V105M1051.5 103V106M1055.5 103V105M1059.5 103V106M1063.5 103V105M1067.5 103V106" stroke="#9a6a00" />
                </Tool>
              </Cells>
              <GroupLabel>INSPECT <Caret /></GroupLabel>
            </Group>
            <Divider $l={0} $r={0} />
            <Group $w={68}>
              <Cells>
                <Tool x={1098} w={68}>
                  <rect x="1117" y="85" width="29" height="30" fill="#7fc5fa" stroke="#4a97d0" />
                  <path d="M1117.5 108L1124 99C1128 95 1131 105 1135 106C1138 107 1140 102 1142 103L1145.5 108V114.5H1117.5Z" fill="#3f8fca" />
                  <circle cx="1138" cy="93" r="3.2" fill="#fdf6c8" />
                </Tool>
              </Cells>
              <GroupLabel>INSERT <Caret /></GroupLabel>
            </Group>
            <Divider $l={0} $r={0} />
            <Group $w={76}>
              <Cells>
                <Tool x={1168} w={76}>
                  <rect x="1185" y="81" width="38" height="39" fill="#0696d7" />
                  <rect x="1188.5" y="84.5" width="27" height="21" stroke="#8fe38a" strokeDasharray="3 2" />
                  <path d="M1209 98.5V115L1213 111.5L1215.5 117L1218 116L1215.5 110.5H1221Z" fill="#fff" />
                </Tool>
              </Cells>
              <GroupLabel>SELECT <Caret /></GroupLabel>
            </Group>
            <Group $w={103} $bg="#cce8f5">
              <Cells>
                <Tool x={1244} w={103}>
                  <circle cx="1295" cy="100" r="15.5" fill="#6ac700" />
                  <path d="M1287.5 100.5L1293 106L1303 95.5" stroke="#fff" strokeWidth="3.4" />
                </Tool>
              </Cells>
              <GroupLabel>FINISH SKETCH <Caret /></GroupLabel>
            </Group>
          </ToolRow>
        </RibbonMain>
      </Ribbon>

      <Canvas>
        <SketchScene />

        <SidePanel $top={5}>
          <ChipIcon $ml={5} width="10" height="7" viewBox="0 0 10 7" fill="#333"><path d="M5 0V7L0 3.5ZM10 0V7L5 3.5Z" /></ChipIcon>
          <PanelTitle $ml={9}>BROWSER</PanelTitle>
          <svg width="9" height="9" viewBox="0 0 9 9"><circle cx="4.5" cy="4.5" r="4.5" fill="#333" /><path d="M2 4.5H7" stroke="#fff" strokeWidth="1.2" /></svg>
          <Grip />
        </SidePanel>

        <Tree>
          <TreeRow $pl={21}>
            <ChipIcon width="11" height="11" viewBox="0 0 11 11"><path d="M10.5.5V10.5H.5Z" fill="#bbb" stroke="#333" /></ChipIcon>
            <Chip $ml={7} $pl={5} $pr={8}>
              <Eye />
              <RootBar>
                <ChipIcon width="16" height="15" viewBox="0 0 16 15"><path d="M1 3.5L4 .5H15V11.5L12 14.5H1Z" fill="#fff" stroke="#555" /><path d="M1 3.5H12V14.5M12 3.5L15 .5" fill="none" stroke="#555" /></ChipIcon>
                <RootName>(Unsaved)</RootName>
              </RootBar>
              <ChipIcon width="13" height="13" viewBox="0 0 13 13"><circle cx="6.5" cy="6.5" r="5.8" fill="#fff" stroke="#333" /><circle cx="6.5" cy="6.5" r="2.3" fill="#333" /></ChipIcon>
            </Chip>
          </TreeRow>
          <TreeRow $pl={40}>
            <Expand />
            <Chip $ml={9} $pl={3} $pr={11}><Gear /><ChipText $ml={14}>Document Settings</ChipText></Chip>
          </TreeRow>
          <TreeRow $pl={40}>
            <Expand />
            <Chip $ml={9} $pl={3} $pr={9}><Folder /><ChipText $ml={14}>Named Views</ChipText></Chip>
          </TreeRow>
          <TreeRow $pl={40}>
            <Expand />
            <Chip $ml={9} $pl={3} $pr={10}><Eye /><Folder ml={9} /><ChipText $ml={14}>Origin</ChipText></Chip>
          </TreeRow>
          <TreeRow $pl={40}>
            <Expand />
            <Chip $ml={9} $pl={3} $pr={12}><Eye /><Folder ml={9} /><ChipText $ml={14}>Sketches</ChipText></Chip>
          </TreeRow>
        </Tree>

        <SidePanel $bottom={5}>
          <PanelTitle $ml={24}>COMMENTS</PanelTitle>
          <svg width="9" height="9" viewBox="0 0 9 9"><circle cx="4.5" cy="4.5" r="4.5" fill="#333" /><path d="M2 4.5H7M4.5 2V7" stroke="#fff" strokeWidth="1.2" /></svg>
          <Grip />
        </SidePanel>

        <AxisMark $x={1292} $y={19} $c="#a8e8a8">Y</AxisMark>
        <ViewCube><CubeFace>TOP</CubeFace></ViewCube>
        <AxisMark $x={1338} $y={64} $c="#f8a0a0">X</AxisMark>
        <AxisMark $x={1286} $y={71} $c="#a8a8f0">Z</AxisMark>

        <Palette>
          <PaletteHead>
            <Grip />
            <ChipIcon $ml={4} width="9" height="9" viewBox="0 0 9 9"><circle cx="4.5" cy="4.5" r="4.5" fill="#333" /><path d="M2 4.5H7" stroke="#fff" strokeWidth="1.2" /></ChipIcon>
            <PaletteTitle>SKETCH PALETTE</PaletteTitle>
            <svg width="10" height="7" viewBox="0 0 10 7" fill="#333"><path d="M0 0V7L5 3.5ZM5 0V7L10 3.5Z" /></svg>
          </PaletteHead>
          <OptionsHead><Caret $w={8} $c="#333" />Options</OptionsHead>
          {options.map(o => (
            <OptRow key={o.label}>
              <OptLabel>{o.label}</OptLabel>
              <ControlSlot><Control kind={o.kind} /></ControlSlot>
            </OptRow>
          ))}
          <PaletteFoot><FinishBtn>Finish Sketch</FinishBtn></PaletteFoot>
        </Palette>

        <NavBar>
          <ChipIcon width="16" height="17" viewBox="0 0 16 17" fill="none" stroke="#333">
            <path d="M8 1V16M8 1L6 3.5H10ZM4 8H1M1 8L3 6V10Z" /><path d="M13 6C16 8 14 11 9 11C5 11 1 10 1 8C1 7 2 6 4 6" />
          </ChipIcon>
          <Caret $ml={6} $w={7} />
          <ChipIcon $ml={5} width="16" height="16" viewBox="0 0 16 16"><path d="M.5 5.5V15.5H15.5V5.5H.5ZM2 5L4.5 1.5L6 4H10.5L14 2.5V5" fill="none" stroke="#3c4652" /><rect x="3" y="8" width="10" height="4" fill="#a9b2c0" stroke="#3c4652" strokeWidth=".7" /></ChipIcon>
          <ChipIcon $ml={10} width="16" height="16" viewBox="0 0 16 16" fill="#fff" stroke="#333" strokeWidth=".9">
            <path d="M4 15C2 12 .5 10 1 9C2 8 3 9 4 10.5V3C4 2 5.5 2 5.5 3V7V1.5C5.5.5 7.2.5 7.2 1.5V7V2C7.2 1 9 1 9 2V7.5V3.5C9 2.5 10.5 2.5 10.5 3.5V10C10.5 12 10 13.5 9.5 15Z" />
          </ChipIcon>
          <ChipIcon $ml={10} width="17" height="16" viewBox="0 0 17 16" fill="none">
            <circle cx="6" cy="7" r="5" fill="#dfeaf2" stroke="#555" /><path d="M9.5 10.5L14 15" stroke="#333" strokeWidth="2" /><path d="M12 4H17M14.5 1.5V4M12 6.5H17" stroke="#444" />
          </ChipIcon>
          <ChipIcon $ml={9} width="16" height="16" viewBox="0 0 16 16" fill="none">
            <rect x=".5" y=".5" width="15" height="15" stroke="#777" strokeDasharray="1.5 1.5" /><circle cx="6.5" cy="6.5" r="5" fill="#dfeaf2" stroke="#555" /><path d="M10 10L15 15" stroke="#333" strokeWidth="2.2" />
          </ChipIcon>
          <Caret $ml={5} $w={7} />
          <ChipIcon $ml={15} width="16" height="16" viewBox="0 0 16 16"><rect x=".5" y=".5" width="15" height="11" fill="#9fbfe6" stroke="#333" /><path d="M5 15H11M8 12V15" stroke="#333" strokeWidth="1.3" /></ChipIcon>
          <Caret $ml={2} $w={7} />
          <ChipIcon $ml={4} width="16" height="16" viewBox="0 0 16 16" fill="#c9c9c9" stroke="#555" strokeWidth=".6">
            <rect x=".3" y=".3" width="15.4" height="15.4" />
            <path d="M3.3 0V16M6.3 0V16M9.3 0V16M12.3 0V16M0 3.3H16M0 6.3H16M0 9.3H16M0 12.3H16" fill="none" />
          </ChipIcon>
          <Caret $ml={2} $w={7} />
          <ChipIcon $ml={4} width="16" height="14" viewBox="0 0 16 14" fill="#a9c7ea" stroke="#264a78"><rect x=".5" y=".5" width="7" height="6" /><rect x="8.5" y=".5" width="7" height="6" /><rect x=".5" y="7.5" width="7" height="6" /><rect x="8.5" y="7.5" width="7" height="6" /></ChipIcon>
          <Caret $ml={2} $w={7} />
        </NavBar>
      </Canvas>

      <Timeline><TimelineDot /><Marker /></Timeline>

      <Taskbar>
        <TaskCell $w={36}><Taskicons.Win /></TaskCell>
        <TaskCell $w={40}><Taskicons.Search /></TaskCell>
        <TaskSep />
        <TaskCell $w={37}><Taskicons.Edge /></TaskCell>
        <TaskCell $w={37} $line><Taskicons.Folder /></TaskCell>
        <TaskCell $w={37}><Taskicons.Store /></TaskCell>
        <TaskCell $w={37}><AmazonTile>a</AmazonTile></TaskCell>
        <TaskCell $w={37}><Taskicons.Dropbox /></TaskCell>
        <TaskCell $w={37}><Taskicons.Bolt /></TaskCell>
        <TaskCell $w={37}><Taskicons.Mail /></TaskCell>
        <TaskCell $w={37} $line><Taskicons.Firefox /></TaskCell>
        <TaskCell $w={37} $active $line><FusionLogo size={16} /></TaskCell>
        <TaskCell $w={37} $line><Taskicons.Word /></TaskCell>
        <Tray>
          <TaskCell $w={30}>
            <svg width="23" height="23" viewBox="0 0 23 23">
              <circle cx="11" cy="11" r="10" fill="#fff" stroke="#1d9be0" strokeWidth="2" />
              <text x="11" y="16" textAnchor="middle" fontFamily="Liberation Sans" fontSize="15" fontWeight="700" fill="#1d7fd0">?</text>
              <circle cx="18" cy="18" r="4.5" fill="#f5a623" /><path d="M18 16V20" stroke="#fff" />
            </svg>
          </TaskCell>
          <TaskCell $w={34}><svg width="11" height="7" viewBox="0 0 11 7" fill="none" stroke="#eee"><path d="M.5 6.5L5.5 1L10.5 6.5" /></svg></TaskCell>
          <TaskCell $w={32}>
            <svg width="17" height="11" viewBox="0 0 17 11" fill="none" stroke="#eee"><path d="M1 1V4M4 1V4M0 4H5V6C5 7 4 7.5 2.5 7.5V10" /><rect x="6.5" y="2.5" width="9" height="7" /><rect x="7.5" y="3.5" width="4" height="5" fill="#eee" stroke="none" /><path d="M16.5 5V7" /></svg>
          </TaskCell>
          <TaskCell $w={33}>
            <svg width="14" height="14" viewBox="0 0 14 14" fill="none" stroke="#bbb"><path d="M1 13C1 6 6 1 13 1M4 13C4 8 8 4 13 4M7 13C7 10 10 7 13 7M10 13C10 11.5 11.5 10 13 10" /></svg>
          </TaskCell>
          <TaskCell $w={27}>
            <svg width="16" height="14" viewBox="0 0 16 14" fill="none" stroke="#ddd"><path d="M.5 5V9H3L7 12.5V1.5L3 5Z" /><path d="M9.5 4.5C10.5 6 10.5 8 9.5 9.5" /><path d="M11.5 3C13 5.5 13 8.5 11.5 11" stroke="#999" /><path d="M13.5 1.5C15.5 5 15.5 9 13.5 12.5" stroke="#777" /></svg>
          </TaskCell>
          <Clock><span>4:10 AM</span><span>10/8/2020</span></Clock>
          <TaskCell $w={38}>
            <svg width="16" height="15" viewBox="0 0 16 15" fill="none" stroke="#eee"><path d="M.5.5H15.5V11.5H11.5V14L8.5 11.5H.5Z" /></svg>
          </TaskCell>
          <TrayEnd />
        </Tray>
      </Taskbar>
    </Shell>
  );
}
